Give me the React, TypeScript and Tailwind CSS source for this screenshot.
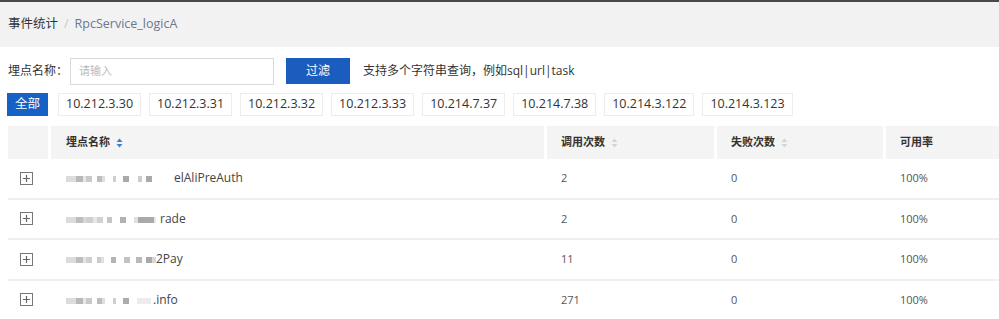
const hosts = [
  "10.212.3.30",
  "10.212.3.31",
  "10.212.3.32",
  "10.212.3.33",
  "10.214.7.37",
  "10.214.7.38",
  "10.214.3.122",
  "10.214.3.123",
];

// mosaic left over from the redacted part of each name: [width, colour]
type Seg = [number, string];

const rows: { mosaic: Seg[]; name: string; calls: string }[] = [
  {
    mosaic: [
      [10, "#dcdcdc"], [7, "#b9b9b9"], [3, "#e6e6e6"], [6, "#c9c9c9"], [5, "#fff"],
      [5, "#bdbdbd"], [3, "#dedede"], [8, "#fff"], [3, "#cfcfcf"], [7, "#fff"],
      [6, "#a9a9a9"], [9, "#fff"], [4, "#cdcdcd"], [4, "#fff"], [6, "#aaaaaa"], [22, "#fff"],
    ],
    name: "elAliPreAuth",
    calls: "2",
  },
  {
    mosaic: [
      [10, "#dcdcdc"], [7, "#bdbdbd"], [4, "#d6d6d6"], [6, "#cfcfcf"], [4, "#e6e6e6"],
      [6, "#d2d2d2"], [4, "#fff"], [5, "#c6c6c6"], [8, "#fff"], [6, "#b2b2b2"],
      [8, "#fff"], [4, "#e0e0e0"], [16, "#a9a9a9"], [2, "#e8e8e8"], [4, "#fff"],
    ],
    name: "rade",
    calls: "2",
  },
  {
    mosaic: [
      [10, "#dcdcdc"], [7, "#bdbdbd"], [3, "#e4e4e4"], [6, "#cfcfcf"], [5, "#fff"],
      [4, "#cbcbcb"], [3, "#e0e0e0"], [7, "#fff"], [5, "#b4b4b4"], [8, "#fff"],
      [6, "#c2c2c2"], [6, "#fff"], [6, "#b9b9b9"], [4, "#fff"], [6, "#aaaaaa"], [4, "#d8d8d8"],
    ],
    name: "2Pay",
    calls: "11",
  },
  {
    mosaic: [
      [10, "#dcdcdc"], [7, "#b9b9b9"], [3, "#e6e6e6"], [6, "#c9c9c9"], [5, "#fff"],
      [5, "#bdbdbd"], [3, "#dedede"], [8, "#fff"], [3, "#cfcfcf"], [7, "#fff"],
      [6, "#ababab"], [8, "#fff"], [14, "#ececec"], [2, "#fff"],
    ],
    name: ".info",
    calls: "271",
  },
];

function SortIcon({ active }: { active?: boolean }) {
  const c = active ? "#3d7fd6" : "#d4d4d4";
  return (
    <svg width="7" height="10" viewBox="0 0 7 10" className="ml-1.5">
      <path d="M3.5 0.5L6.5 4H0.5z" fill={c} />
      <path d="M3.5 9.5L6.5 6H0.5z" fill={c} />
    </svg>
  );
}

function PlusBox() {
  return (
    <svg width="13" height="13" viewBox="0 0 13 13">
      <rect x="0.5" y="0.5" width="12" height="12" fill="white" stroke="#777" />
      <path d="M3 6.5h7M6.5 3v7" stroke="#666" strokeWidth="1.2" />
    </svg>
  );
}

function Mosaic({ segs }: { segs: Seg[] }) {
  return (
    <div className="flex items-center h-[6px] mt-[2px]">
      {segs.map(([w, c], i) => (
        <div key={i} className="h-[6px]" style={{ width: w, background: c }} />
      ))}
    </div>
  );
}

export default function App() {
  return (
    <div
      className="w-[999px] h-[319px] overflow-hidden bg-white text-[#333]"
      style={{ fontFamily: '"Open Sans", "Noto Sans CJK SC", sans-serif' }}
    >
      <div className="border-t-2 border-[#4a4a4a] bg-[#f2f2f2] h-[47px] flex items-center px-2 text-[12.5px]">
        <span className="text-[#333]">事件统计</span>
        <span className="mx-[6px] text-[#c8c8c8]">/</span>
        <span className="text-[#6b7890]">RpcService_logicA</span>
      </div>

      <div className="flex items-center h-[46px] pl-2 pt-[2px] text-[12px]">
        <span className="w-[62px] shrink-0 whitespace-nowrap text-[#333]">埋点名称：</span>
        <div className="w-[204px] shrink-0 h-[27px] border border-[#d9d9d9] flex items-center px-2 text-[11px] text-[#bbb]">
          请输入
        </div>
        <button className="ml-[12px] shrink-0 w-[64px] h-[26px] bg-[#1b5cbf] text-white text-[12px]">
          过滤
        </button>
        <span className="ml-[13px] whitespace-nowrap text-[#333]">
          支持多个字符串查询，例如sql|url|task
        </span>
      </div>

      <div className="flex items-center gap-[8px] pl-[7px] h-[23px] text-[12.5px]">
        <span className="h-[23px] px-[8px] mr-[2px] flex items-center bg-[#1561c6] text-white">全部</span>
        {hosts.map((h) => (
          <span
            key={h}
            className="h-[23px] px-[7px] flex items-center border border-[#ececec] text-[#333]"
          >
            {h}
          </span>
        ))}
      </div>

      <div className="mt-[10px] pl-2">
        <div className="grid grid-cols-[40px_493px_167px_166px_1fr] gap-x-[3px] h-[33px] text-[11px] font-semibold text-[#333]">
          <div className="bg-[#f4f4f4]" />
          <div className="bg-[#f4f4f4] flex items-center pl-[15px]">
            埋点名称
            <SortIcon active />
          </div>
          <div className="bg-[#f4f4f4] flex items-center pl-[14px]">
            调用次数
            <SortIcon />
          </div>
          <div className="bg-[#f4f4f4] flex items-center pl-[14px]">
            失败次数
            <SortIcon />
          </div>
          <div className="bg-[#f4f4f4] flex items-center pl-[14px]">可用率</div>
        </div>

        {rows.map((r, i) => (
          <div
            key={i}
            className="grid grid-cols-[40px_493px_167px_166px_1fr] gap-x-[3px] h-[40.5px] border-b-2 border-[#efefef] text-[11px] text-[#555]"
          >
            <div className="flex items-center pl-[12px]">
              <PlusBox />
            </div>
            <div className="flex items-center pl-[15px]">
              <Mosaic segs={r.mosaic} />
              <span className="text-[#444] text-[12px]">{r.name}</span>
            </div>
            <div className="flex items-center pl-[14px]">{r.calls}</div>
            <div className="flex items-center pl-[14px]">0</div>
            <div className="flex items-center pl-[14px]">100%</div>
          </div>
        ))}
      </div>
    </div>
  );
}
